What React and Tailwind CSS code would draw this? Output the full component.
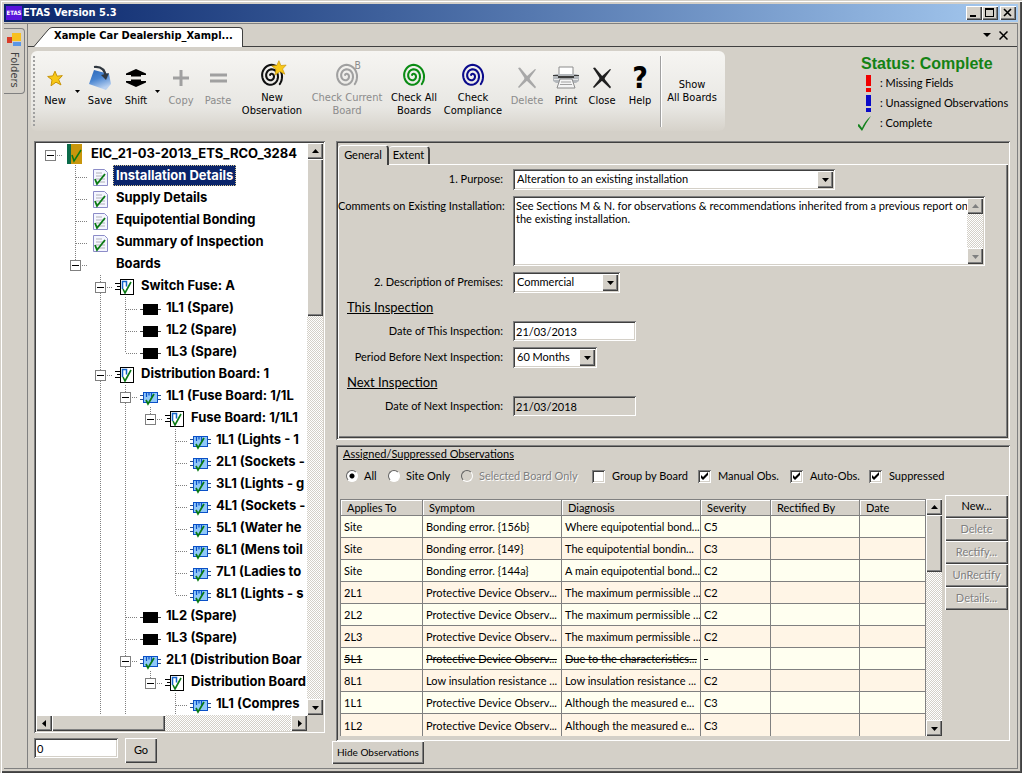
import { useState } from 'react'
import clsx from 'clsx'

const raised =
  'bg-[#d4d0c8] shadow-[inset_1px_1px_0_#fff,inset_-1px_-1px_0_#404040,inset_-2px_-2px_0_#808080]'
const sunken =
  'shadow-[inset_1px_1px_0_#808080,inset_-1px_-1px_0_#fff,inset_2px_2px_0_#404040,inset_-2px_-2px_0_#d4d0c8]'
const track = 'bg-[conic-gradient(#fff_25%,#d4d0c8_0_50%,#fff_0_75%,#d4d0c8_0)] bg-[size:2px_2px]'
const tahoma = "font-['DejaVu_Sans_Condensed','DejaVu_Sans',sans-serif]"

// depth, label, icon, expanded, ancestor columns that carry a line, last child
const treeRows = [
  { depth: 0, text: 'EIC_21-03-2013_ETS_RCO_3284', icon: 'book', open: true, lines: [], last: true },
  { depth: 1, text: 'Installation Details', icon: 'doc', lines: [], selected: true },
  { depth: 1, text: 'Supply Details', icon: 'doc', lines: [] },
  { depth: 1, text: 'Equipotential Bonding', icon: 'doc', lines: [] },
  { depth: 1, text: 'Summary of Inspection', icon: 'doc', lines: [] },
  { depth: 1, text: 'Boards', icon: 'none', open: true, lines: [], last: true },
  { depth: 2, text: 'Switch Fuse: A', icon: 'board', open: true, lines: [] },
  { depth: 3, text: '1L1 (Spare)', icon: 'spare', lines: [2] },
  { depth: 3, text: '1L2 (Spare)', icon: 'spare', lines: [2] },
  { depth: 3, text: '1L3 (Spare)', icon: 'spare', lines: [2], last: true },
  { depth: 2, text: 'Distribution Board: 1', icon: 'board', open: true, lines: [] },
  { depth: 3, text: '1L1 (Fuse Board: 1/1L', icon: 'circuit', open: true, lines: [2] },
  { depth: 4, text: 'Fuse Board: 1/1L1', icon: 'board', open: true, lines: [2, 3], last: true },
  { depth: 5, text: '1L1 (Lights - 1', icon: 'circuit', lines: [2, 3] },
  { depth: 5, text: '2L1 (Sockets -', icon: 'circuit', lines: [2, 3] },
  { depth: 5, text: '3L1 (Lights - g', icon: 'circuit', lines: [2, 3] },
  { depth: 5, text: '4L1 (Sockets -', icon: 'circuit', lines: [2, 3] },
  { depth: 5, text: '5L1 (Water he', icon: 'circuit', lines: [2, 3] },
  { depth: 5, text: '6L1 (Mens toil', icon: 'circuit', lines: [2, 3] },
  { depth: 5, text: '7L1 (Ladies to', icon: 'circuit', lines: [2, 3] },
  { depth: 5, text: '8L1 (Lights - s', icon: 'circuit', lines: [2, 3], last: true },
  { depth: 3, text: '1L2 (Spare)', icon: 'spare', lines: [2] },
  { depth: 3, text: '1L3 (Spare)', icon: 'spare', lines: [2] },
  { depth: 3, text: '2L1 (Distribution Boar', icon: 'circuit', open: true, lines: [2] },
  { depth: 4, text: 'Distribution Board', icon: 'board', open: true, lines: [2, 3], last: true },
  { depth: 5, text: '1L1 (Compres', icon: 'circuit', lines: [2, 3] },
]

const observations = [
  { applies: 'Site', symptom: 'Bonding error. {156b}', diagnosis: 'Where equipotential bond...', severity: 'C5' },
  { applies: 'Site', symptom: 'Bonding error. {149}', diagnosis: 'The equipotential bondin...', severity: 'C3' },
  { applies: 'Site', symptom: 'Bonding error. {144a}', diagnosis: 'A main equipotential bond...', severity: 'C2' },
  { applies: '2L1', symptom: 'Protective Device Observ...', diagnosis: 'The maximum permissible ...', severity: 'C2' },
  { applies: '2L2', symptom: 'Protective Device Observ...', diagnosis: 'The maximum permissible ...', severity: 'C2' },
  { applies: '2L3', symptom: 'Protective Device Observ...', diagnosis: 'The maximum permissible ...', severity: 'C2' },
  { applies: '5L1', symptom: 'Protective Device Observ...', diagnosis: 'Due to the characteristics...', severity: '-', suppressed: true },
  { applies: '8L1', symptom: 'Low insulation resistance ...', diagnosis: 'Low insulation resistance ...', severity: 'C2' },
  { applies: '1L1', symptom: 'Protective Device Observ...', diagnosis: 'Although the measured e...', severity: 'C3' },
  { applies: '1L2', symptom: 'Protective Device Observ...', diagnosis: 'Although the measured e...', severity: 'C3' },
]

const columns = [
  { title: 'Applies To', width: 'w-[82px]' },
  { title: 'Symptom', width: 'w-[139px]' },
  { title: 'Diagnosis', width: 'w-[139px]' },
  { title: 'Severity', width: 'w-[70px]' },
  { title: 'Rectified By', width: 'w-[89px]' },
  { title: 'Date', width: 'w-[66px]' },
]

const spiral = Array.from({ length: 100 }, (_, i) => {
  const t = i / 99
  const angle = 0.7 - t * Math.PI * 5
  const r = 13.5 - 12 * t
  return `${i ? 'L' : 'M'}${(15 + r * 0.9 * Math.cos(angle)).toFixed(1)} ${(17 + r * Math.sin(angle)).toFixed(1)}`
}).join('')

const starPath = 'M12 1l3 7.5 8-.8-5.500 6 3.500 8L13.500 17.500 6 23l1.500-9L1 9l7.700-.8z'

const Arrow = ({ dir = 'down', className = 'text-black' }) => {
  const paths = {
    down: 'M0 2h7L3.500 6z',
    up: 'M0 5h7L3.500 1z',
    left: 'M5 0v7L1 3.500z',
    right: 'M2 0v7l4-3.500z',
  }
  return (
    <svg viewBox="0 0 7 7" className={clsx('h-[7px] w-[7px] shrink-0', className)} fill="currentColor" aria-hidden="true">
      <path d={paths[dir]} />
    </svg>
  )
}

const ScrollButton = ({ dir, disabled }) => (
  <button
    type="button"
    aria-label={`Scroll ${dir}`}
    disabled={disabled}
    className={clsx('flex h-4 w-4 shrink-0 items-center justify-center', raised)}
  >
    <Arrow dir={dir} className={disabled ? 'text-[#808080]' : 'text-black'} />
  </button>
)

const VScroll = ({ thumb, disabled }) => (
  <div className={clsx('flex w-4 shrink-0 flex-col justify-between', track)}>
    <div>
      <ScrollButton dir="up" disabled={disabled} />
      {thumb && <div className={clsx(thumb, raised)} />}
    </div>
    <ScrollButton dir="down" disabled={disabled} />
  </div>
)

const Guide = ({ up, down, across, box }) => (
  <svg viewBox="0 0 25 22" className="h-[22px] w-[25px] shrink-0" shapeRendering="crispEdges" aria-hidden="true">
    <g stroke="#808080" strokeDasharray="1 1">
      {up && <path d="M12.500 0v12" />}
      {down && <path d="M12.500 12v10" />}
      {across && <path d="M13 12.500h12" />}
    </g>
    {box && (
      <>
        <rect x="7.500" y="7.500" width="10" height="10" fill="#fff" stroke="#808080" />
        <path d="M9 12.500h7" stroke="#000" />
      </>
    )}
  </svg>
)

const TreeIcon = ({ name }) => (
  <svg viewBox="0 0 25 22" className="h-[22px] w-[25px] shrink-0" aria-hidden="true">
    {name === 'book' && (
      <>
        <path d="M4 1h5v20H4z" fill="#0b6b4a" />
        <path d="M8 1h11v20H8z" fill="#c8960c" />
        <path d="M9 12l2 6 7-11" fill="none" stroke="#0a7a14" strokeWidth="1.500" />
      </>
    )}
    {name === 'doc' && (
      <>
        <path d="M5.500 4.500h11l3 3v13h-14z" fill="#f4f6ff" stroke="#8c8cc8" />
        <path d="M8 8h6M8 11h9M8 14h9M8 17h9" stroke="#b0b0b8" />
        <path d="M7 14l2 5 8-10" fill="none" stroke="#0a7a14" strokeWidth="1.800" />
      </>
    )}
    {name === 'board' && (
      <>
        <path d="M2 8.500h5M4 11.500h3M2 14.500h5" stroke="#000" shapeRendering="crispEdges" />
        <rect x="7.500" y="4.500" width="13" height="15" fill="#fff" stroke="#000" shapeRendering="crispEdges" />
        <path d="M9.500 14V6.500h4v5" fill="none" stroke="#1464c8" strokeWidth="1.500" />
        <path d="M10 14l2 4 6-11" fill="none" stroke="#0a7a14" strokeWidth="1.600" />
      </>
    )}
    {name === 'spare' && (
      <g shapeRendering="crispEdges">
        <path d="M2 12.500h21" stroke="#404040" />
        <path d="M5 7h15v11H5z" fill="#000" />
      </g>
    )}
    {name === 'circuit' && (
      <>
        <path d="M2 10.500h21M2 14.500h21" stroke="#28508c" shapeRendering="crispEdges" />
        <rect x="5.500" y="7.500" width="14" height="10" fill="#90c8fa" stroke="#0a50c8" shapeRendering="crispEdges" />
        <path d="M8.500 12V7.500h5V12M11 7.500v3" fill="none" stroke="#0a50c8" strokeWidth="1.200" />
        <path d="M8 15l2 4 6-10" fill="none" stroke="#0a7a14" strokeWidth="1.700" />
      </>
    )}
  </svg>
)

const TreeRow = ({ row }) => (
  <li className="flex h-[22px] whitespace-nowrap pl-[2px]">
    {Array.from({ length: row.depth }, (_, col) => (
      <Guide key={col} up={row.lines.includes(col)} down={row.lines.includes(col)} />
    ))}
    <Guide up={row.depth > 0} down={!row.last && row.depth > 0} across box={row.open} />
    <TreeIcon name={row.icon} />
    <span
      className={clsx(
        "h-[21px] pl-[3px] font-[Inter,'Liberation_Sans',sans-serif] text-[13px] leading-5 font-bold",
        row.selected && 'bg-[#0a246a] pr-[3px] text-white outline-1 -outline-offset-1 outline-dotted outline-[#d8c890]'
      )}
    >
      {row.text}
    </span>
  </li>
)

const ToolButton = ({ width, icon, label, twoLines, disabled }) => (
  <button
    type="button"
    disabled={disabled}
    className={clsx(
      'flex shrink-0 flex-col items-center text-[11px] leading-[13px]',
      width,
      twoLines ? 'pt-2' : 'pt-[11px]',
      disabled ? 'text-[#8c8c8c]' : 'text-black'
    )}
  >
    <span className="flex h-8 items-center justify-center">{icon}</span>
    <span className="text-center">{label}</span>
  </button>
)

const MenuArrow = ({ width }) => (
  <button type="button" aria-label="More" className={clsx('flex h-full shrink-0 items-center justify-center', width)}>
    <svg viewBox="0 0 5 3" className="h-[3px] w-[5px]" aria-hidden="true">
      <path d="M0 0h5L2.500 3z" />
    </svg>
  </button>
)

const SpiralIcon = ({ color, children }) => (
  <svg viewBox="0 0 32 32" className="h-[30px] w-[30px] overflow-visible" aria-hidden="true">
    <path d={spiral} fill="none" stroke={color} strokeWidth="2.200" strokeLinecap="round" />
    {children}
  </svg>
)

const CrossIcon = ({ color }) => (
  <svg viewBox="0 0 20 22" className="h-[22px] w-5" fill={color} aria-hidden="true">
    <path d="M1 1l2-.5L11 10l8 10-1 1.500L8.500 12.500z" />
    <path d="M18 2l1 .5L12 12 2 21l-1-1L9 10z" />
    <circle cx="10" cy="11.500" r="2.500" />
  </svg>
)

const icons = {
  star: (
    <svg viewBox="0 0 24 24" className="h-[17px] w-4" aria-hidden="true">
      <path d={starPath} fill="#f8c818" stroke="#c89408" strokeWidth="1.500" />
    </svg>
  ),
  save: (
    <svg viewBox="0 0 24 26" className="h-[26px] w-6" aria-hidden="true">
      <defs>
        <linearGradient id="saveFill" x1="0" y1="0" x2="0.400" y2="1">
          <stop offset="0" stopColor="#2c68b8" />
          <stop offset="0.500" stopColor="#4884d0" />
          <stop offset="1" stopColor="#b8d0f0" />
        </linearGradient>
      </defs>
      <path d="M6 5l15 4 2 10-5 6L1 19z" fill="url(#saveFill)" />
      <path d="M6 2c8-1 11 3 12 10" fill="none" stroke="#303840" strokeWidth="2.200" />
      <path d="M13 10l5 5 3-7z" fill="#303840" />
    </svg>
  ),
  shift: (
    <svg viewBox="0 0 20 18" className="h-[18px] w-5" aria-hidden="true">
      <path d="M10 0l10 4.500V6h-5v1.500H5V6H0V4.500zM10 18l10-4.500V12h-5v-1.500H5V12H0v1.500z" />
    </svg>
  ),
  plus: (
    <svg viewBox="0 0 18 18" className="h-[18px] w-[18px]" aria-hidden="true">
      <path d="M9 1v16M1 9h16" stroke="#a0a0a0" strokeWidth="3" />
    </svg>
  ),
  equals: (
    <svg viewBox="0 0 18 18" className="h-[18px] w-[18px]" aria-hidden="true">
      <path d="M1 6h17M1 12h17" stroke="#a0a0a0" strokeWidth="3" />
    </svg>
  ),
  printer: (
    <svg viewBox="0 0 28 24" className="h-6 w-7" aria-hidden="true">
      <path d="M7 1h14v9H7z" fill="#fff" stroke="#8c8c8c" />
      <path d="M1 9l3-1h20l3 1v6l-3 2H4l-3-2z" fill="#b4b8bc" />
      <path d="M1 9h5v3h16V9h5v1H1z" fill="#3c3c3c" />
      <path d="M2 13h24v1H2z" fill="#e8e8e8" />
      <path d="M8 13h12l3 9H5z" fill="#f4f4f4" stroke="#8c8c8c" />
      <path d="M9 16h10M8 18.500h12" stroke="#a0a0a0" />
    </svg>
  ),
  help: <span className="text-[30px] leading-7 font-bold">?</span>,
}

const SelectBox = ({ id, value, width }) => (
  <div className={clsx('relative h-[21px] bg-white p-[2px]', width, sunken)}>
    <select id={id} defaultValue={value} className="h-full w-full appearance-none bg-transparent pl-[2px] outline-none">
      <option>{value}</option>
    </select>
    <span
      className={clsx(
        'pointer-events-none absolute inset-y-[2px] right-[2px] flex w-4 items-center justify-center',
        raised
      )}
    >
      <Arrow />
    </span>
  </div>
)

const FieldLabel = ({ htmlFor, children }) => (
  <label htmlFor={htmlFor} className="pt-[3px] text-right leading-[13px] whitespace-nowrap">
    {children}
  </label>
)

const SectionTitle = ({ children }) => (
  <h2 className="col-span-2 pl-[9px] text-[13px] leading-4 underline">{children}</h2>
)

const RadioOption = ({ label, width, value, current, onChange, disabled }) => (
  <label className={clsx('flex items-center gap-[6px] whitespace-nowrap', width, disabled && 'text-[#808080]')}>
    <input
      type="radio"
      name="scope"
      disabled={disabled}
      checked={current === value}
      onChange={() => onChange(value)}
      className="h-3 w-3 shrink-0 appearance-none rounded-full border border-t-[#606060] border-r-white border-b-white border-l-[#606060] bg-white checked:bg-[radial-gradient(#000_2px,#fff_3px)] disabled:bg-[#d4d0c8]"
    />
    <span className={clsx(disabled && '[text-shadow:1px_1px_0_#fff]')}>{label}</span>
  </label>
)

const CheckOption = ({ label, width, defaultChecked }) => (
  <label className={clsx('flex items-center gap-[7px] whitespace-nowrap', width)}>
    <span className="relative h-[13px] w-[13px] shrink-0">
      <input
        type="checkbox"
        defaultChecked={defaultChecked}
        className={clsx('peer block h-[13px] w-[13px] appearance-none bg-white', sunken)}
      />
      <svg
        viewBox="0 0 13 13"
        className="pointer-events-none absolute inset-0 hidden h-[13px] w-[13px] peer-checked:block"
        aria-hidden="true"
      >
        <path d="M3 5v3l2 2 5-5V2L5 7z" />
      </svg>
    </span>
    {label}
  </label>
)

const ObsButton = ({ children, disabled }) => (
  <button
    type="button"
    disabled={disabled}
    className={clsx(
      'h-[23px] w-full text-center',
      raised,
      disabled && 'text-[#808080] [text-shadow:1px_1px_0_#fff]'
    )}
  >
    {children}
  </button>
)

const TitleBar = () => (
  <header className={clsx('flex h-[18px] items-center bg-linear-to-r from-[#0a246a] to-[#a6caf0] px-[2px]', tahoma)}>
    <span className="flex h-[14px] w-4 items-center justify-center bg-[#5a14dc] text-[6px] leading-[14px] font-bold text-white">
      ETAS
    </span>
    <h1 className="flex-1 pl-px text-[11px] leading-[18px] font-bold text-white">ETAS Version 5.3</h1>
    <div className="flex">
      <button type="button" aria-label="Minimize" className={clsx('h-[14px] w-4', raised)}>
        <svg viewBox="0 0 16 14" className="h-[14px] w-4" aria-hidden="true">
          <path d="M4 9h6v2H4z" />
        </svg>
      </button>
      <button type="button" aria-label="Maximize" className={clsx('h-[14px] w-4', raised)}>
        <svg viewBox="0 0 16 14" className="h-[14px] w-4" shapeRendering="crispEdges" aria-hidden="true">
          <path d="M3 2h9v9H3zM4 4v6h7V4z" fillRule="evenodd" />
        </svg>
      </button>
      <button type="button" aria-label="Close" className={clsx('ml-[2px] h-[14px] w-4', raised)}>
        <svg viewBox="0 0 16 14" className="h-[14px] w-4" aria-hidden="true">
          <path d="M4 3l7 7M11 3l-7 7" stroke="#000" strokeWidth="1.600" />
        </svg>
      </button>
    </div>
  </header>
)

const TabStrip = () => (
  <div className={clsx('flex h-[23px] items-end justify-between border-b border-[#404040] pl-[6px]', tahoma)}>
    <div className="-mb-px flex h-5">
      <svg viewBox="0 0 18 20" className="h-5 w-[18px]" aria-hidden="true">
        <path d="M0 20L14 3q2-2.500 4-2.500V20z" fill="#fff" />
        <path d="M0 19.500L14 3q2-2.500 4-2.500" fill="none" stroke="#404040" />
      </svg>
      <div className="rounded-tr-sm border-t border-r border-[#404040] bg-white pr-[9px] pl-[2px] text-[11px] leading-4 font-bold">
        Xample Car Dealership_Xampl...
      </div>
    </div>
    <div className="flex items-center gap-2 self-center pr-[9px]">
      <button type="button" aria-label="Tab list">
        <svg viewBox="0 0 8 4" className="h-1 w-2" aria-hidden="true">
          <path d="M0 0h8L4 4z" />
        </svg>
      </button>
      <button type="button" aria-label="Close tab">
        <svg viewBox="0 0 9 9" className="h-[9px] w-[9px]" aria-hidden="true">
          <path d="M.5.5l8 8M8.500.5l-8 8" stroke="#000" strokeWidth="1.500" />
        </svg>
      </button>
    </div>
  </div>
)

const Toolbar = () => (
  <div
    className={clsx(
      'flex h-20 shrink-0 rounded-md bg-linear-to-b from-[#f6f5f2] via-[#e8e7e3] via-70% to-[#d6d2ca] pr-1 pl-[2px]',
      tahoma
    )}
  >
    <div className="mt-[5px] mr-px mb-1 w-[2px] bg-[repeating-linear-gradient(#a0a0a0_0_2px,transparent_2px_4px)]" />
    <ToolButton width="w-[38px]" icon={icons.star} label="New" />
    <MenuArrow width="w-[6px]" />
    <ToolButton width="w-[40px]" icon={icons.save} label="Save" />
    <ToolButton width="w-[32px]" icon={icons.shift} label="Shift" />
    <MenuArrow width="w-[11px]" />
    <ToolButton width="w-[36px]" icon={icons.plus} label="Copy" disabled />
    <ToolButton width="w-[38px]" icon={icons.equals} label="Paste" disabled />
    <ToolButton
      width="w-[70px]"
      twoLines
      label={<>New<br />Observation</>}
      icon={
        <SpiralIcon color="#101010">
          <path d={starPath} transform="translate(15 0) scale(.7)" fill="#f8c818" stroke="#c89408" />
        </SpiralIcon>
      }
    />
    <ToolButton
      width="w-[80px]"
      twoLines
      disabled
      label={<>Check Current<br />Board</>}
      icon={
        <SpiralIcon color="#a0a0a0">
          <text x="24" y="10" fontSize="11" fill="#8c8c8c">B</text>
        </SpiralIcon>
      }
    />
    <ToolButton width="w-[54px]" twoLines label={<>Check All<br />Boards</>} icon={<SpiralIcon color="#0a8c14" />} />
    <ToolButton width="w-[64px]" twoLines label={<>Check<br />Compliance</>} icon={<SpiralIcon color="#0a0a8c" />} />
    <ToolButton width="w-[44px]" label="Delete" icon={<CrossIcon color="#a8a8a8" />} disabled />
    <ToolButton width="w-[34px]" label="Print" icon={icons.printer} />
    <ToolButton width="w-[38px]" label="Close" icon={<CrossIcon color="#202020" />} />
    <ToolButton width="w-[38px]" label="Help" icon={icons.help} />
    <div className="mx-px mt-[5px] mb-1 w-[2px] border-r border-l border-l-[#a0a0a0] border-r-white" />
    <button type="button" className="w-[58px] text-center text-[11px] leading-[13px]">
      Show
      <br />
      All Boards
    </button>
  </div>
)

const StatusLegend = () => (
  <div className="w-[159px] shrink-0 pt-1">
    <p className="pl-[3px] font-['Liberation_Sans',sans-serif] text-[16px] leading-[18px] font-bold whitespace-nowrap text-[#148214]">
      Status: Complete
    </p>
    <ul className="text-[11px] whitespace-nowrap">
      {[
        { label: ': Missing Fields', color: '#f00000' },
        { label: ': Unassigned Observations', color: '#0a0ac8' },
        { label: ': Complete' },
      ].map((entry) => (
        <li key={entry.label} className="flex h-5 items-center">
          <svg viewBox="0 0 22 20" className="h-5 w-[22px] shrink-0" aria-hidden="true">
            {entry.color ? (
              <path d="M8 2h5v11H8zM8 15h5v4H8z" fill={entry.color} />
            ) : (
              <path d="M-1 12l2-1 3 4Q7 8 13 3 8 10 4 18z" fill="#14821e" />
            )}
          </svg>
          {entry.label}
        </li>
      ))}
    </ul>
  </div>
)

const TreePanel = () => (
  <section className="flex w-[291px] shrink-0 flex-col">
    <div className={clsx('bg-white p-[2px]', sunken)}>
      <div className="flex">
        <ul className="min-w-0 flex-1 overflow-hidden">
          {treeRows.map((row, i) => (
            <TreeRow key={i} row={row} />
          ))}
        </ul>
        <VScroll thumb="h-[157px]" />
      </div>
      <div className="flex bg-[#d4d0c8] pr-4">
        <div className={clsx('flex flex-1', track)}>
          <ScrollButton dir="left" />
          <div className={clsx('mr-auto h-4 w-[113px]', raised)} />
          <ScrollButton dir="right" />
        </div>
      </div>
    </div>
    <form className="flex gap-[7px] pt-[5px] text-[11px]" onSubmit={(e) => e.preventDefault()}>
      <input aria-label="Go to" defaultValue="0" className={clsx('h-5 w-[84px] bg-white px-[3px] outline-none', sunken)} />
      <button type="submit" className={clsx('h-[25px] w-8', raised)}>Go</button>
    </form>
  </section>
)

const DetailsPanel = () => (
  <section className={clsx('p-[2px]', sunken)}>
    <div className="flex h-[21px] items-end text-[11px]" role="tablist">
      <button
        type="button"
        role="tab"
        aria-selected="true"
        className="relative -mb-px h-5 w-[51px] rounded-t-sm border-t border-r-2 border-l border-t-white border-r-[#404040] border-l-white bg-[#d4d0c8]"
      >
        General
      </button>
      <button
        type="button"
        role="tab"
        aria-selected="false"
        className="h-[18px] w-[41px] rounded-t-sm border-t border-r-2 border-t-white border-r-[#404040]"
      >
        Extent
      </button>
    </div>
    <div className={clsx('grid grid-cols-[165px_1fr] gap-x-[10px] gap-y-1.5 pt-[5px] pb-[22px] text-[11px]', raised)}>
      <FieldLabel htmlFor="purpose">1. Purpose:</FieldLabel>
      <SelectBox id="purpose" value="Alteration to an existing installation" width="w-[322px]" />

      <FieldLabel htmlFor="comments">Comments on Existing Installation:</FieldLabel>
      <div className={clsx('flex h-[70px] w-[472px] bg-white p-[2px]', sunken)}>
        <textarea
          id="comments"
          className="min-w-0 flex-1 resize-none overflow-hidden bg-transparent py-px pl-px leading-[13px] whitespace-pre outline-none"
          defaultValue={
            'See Sections M & N. for observations & recommendations inherited from a previous report on\nthe existing installation.'
          }
        />
        <VScroll disabled />
      </div>

      <FieldLabel htmlFor="premises">2. Description of Premises:</FieldLabel>
      <SelectBox id="premises" value="Commercial" width="w-[107px]" />

      <SectionTitle>This Inspection</SectionTitle>
      <FieldLabel htmlFor="thisDate">Date of This Inspection:</FieldLabel>
      <input
        id="thisDate"
        defaultValue="21/03/2013"
        className={clsx('h-5 w-[123px] bg-white px-[3px] outline-none', sunken)}
      />
      <FieldLabel htmlFor="period">Period Before Next Inspection:</FieldLabel>
      <SelectBox id="period" value="60 Months" width="w-[84px]" />

      <SectionTitle>Next Inspection</SectionTitle>
      <FieldLabel htmlFor="nextDate">Date of Next Inspection:</FieldLabel>
      <input
        id="nextDate"
        readOnly
        defaultValue="21/03/2018"
        className={clsx('h-5 w-[123px] bg-[#d4d0c8] px-[3px] outline-none', sunken)}
      />
    </div>
  </section>
)

const ObservationsPanel = () => {
  const [scope, setScope] = useState('all')

  return (
    <section className={clsx('px-[2px] pt-[2px] pb-[5px] text-[11px]', sunken)}>
      <h2 className="pl-[5px] leading-[14px] underline">Assigned/Suppressed Observations</h2>
      <div className="flex h-[34px] items-center pb-1 pl-2">
        <RadioOption label="All" width="w-[42px]" value="all" current={scope} onChange={setScope} />
        <RadioOption label="Site Only" width="w-[73px]" value="site" current={scope} onChange={setScope} />
        <RadioOption label="Selected Board Only" width="w-[131px]" value="board" current={scope} onChange={setScope} disabled />
        <CheckOption label="Group by Board" width="w-[106px]" />
        <CheckOption label="Manual Obs." width="w-[92px]" defaultChecked />
        <CheckOption label="Auto-Obs." width="w-[79px]" defaultChecked />
        <CheckOption label="Suppressed" defaultChecked />
      </div>
      <div className="flex pl-[2px]">
        <div className="flex min-w-0 flex-1 pt-1">
          <table className="w-full flex-1 table-fixed border-separate border-spacing-0 border-t border-l border-[#808080] text-left">
            <thead>
              <tr>
                {columns.map((col) => (
                  <th
                    key={col.title}
                    className={clsx(
                      'h-4 border-r border-b border-[#808080] p-0 pl-[6px] leading-[15px] font-normal shadow-[inset_1px_1px_0_#fff]',
                      col.width
                    )}
                  >
                    {col.title}
                  </th>
                ))}
              </tr>
            </thead>
            <tbody>
              {observations.map((obs, i) => (
                <tr
                  key={i}
                  className={clsx(i % 2 ? 'bg-[#fff5e6]' : 'bg-[#fffff0]', obs.suppressed && 'line-through')}
                >
                  {[obs.applies, obs.symptom, obs.diagnosis, obs.severity, '', ''].map((cell, j) => (
                    <td
                      key={j}
                      className={clsx(
                        'h-[22px] overflow-hidden border-r border-[#808080] p-0 pl-[3px] leading-[21px] whitespace-nowrap',
                        i < observations.length - 1 && 'border-b'
                      )}
                    >
                      {cell}
                    </td>
                  ))}
                </tr>
              ))}
            </tbody>
          </table>
          <VScroll thumb="h-[57px]" />
        </div>
        <div className="ml-[3px] w-[63px] shrink-0">
          <ObsButton>New...</ObsButton>
          <ObsButton disabled>Delete</ObsButton>
          <ObsButton disabled>Rectify...</ObsButton>
          <ObsButton disabled>UnRectify</ObsButton>
          <ObsButton disabled>Details...</ObsButton>
        </div>
      </div>
    </section>
  )
}

const App = () => (
  <div className="flex min-h-screen flex-col bg-[#d4d0c8] p-1 font-[Lato,'Liberation_Sans',sans-serif] text-black shadow-[inset_1px_1px_0_#d4d0c8,inset_2px_2px_0_#fff,inset_-1px_-1px_0_#404040,inset_-2px_-2px_0_#505050]">
    <TitleBar />
    <div className="mt-px flex flex-1 border-t border-r border-b border-[#808080]">
      <aside className="w-[23px] shrink-0 pt-1">
        <button
          type="button"
          className={clsx(
            'flex w-[21px] flex-col items-center gap-[5px] rounded-r-sm border-t border-r border-b border-[#808080] pt-1 pb-[5px] text-[11px] leading-[14px] text-[#404040]',
            tahoma
          )}
        >
          <svg viewBox="0 0 14 14" className="h-[14px] w-[14px]" aria-hidden="true">
            <path d="M5 0h9v8H5z" fill="#f8c020" />
            <path d="M0 4h5v6H0z" fill="#d83c28" />
            <path d="M6 9h8v4H6z" fill="#5a96e6" />
          </svg>
          <span className="[writing-mode:vertical-rl]">Folders</span>
        </button>
      </aside>
      <main className="flex min-w-0 flex-1 flex-col border-l border-[#808080]">
        <TabStrip />
        <div className="flex justify-between pt-1 pl-[3px]">
          <Toolbar />
          <StatusLegend />
        </div>
        <div className="flex gap-[7px] pt-2 pr-[7px] pb-[3px] pl-[6px]">
          <TreePanel />
          <div className="min-w-0 flex-1">
            <div className="flex flex-col gap-[5px] pl-1">
              <DetailsPanel />
              <ObservationsPanel />
            </div>
            <button type="button" className={clsx('block h-[23px] px-[5px] text-[10px]', raised)}>
              Hide Observations
            </button>
          </div>
        </div>
      </main>
    </div>
  </div>
)

export default App
